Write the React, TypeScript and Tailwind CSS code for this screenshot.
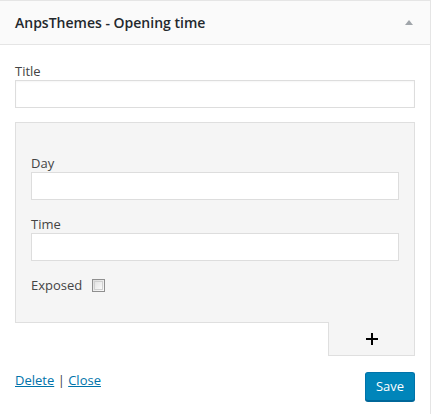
import React from "react";

export default function App() {
  return (
    <div
      className="w-[431px] h-[414px] bg-white text-[13px] text-[#444]"
      style={{ fontFamily: '"Open Sans", "Liberation Sans", sans-serif' }}
    >
      <div className="w-[431px] h-[414px] border-t border-r border-[#e5e5e5] flex flex-col">
        <div className="h-[44px] bg-[#fafafa] border-b border-[#e5e5e5] flex items-center justify-between pl-[15px] pr-[17px]">
          <span className="text-[14px] font-semibold text-[#23282d] leading-none">
            AnpsThemes - Opening time
          </span>
          <svg width="8" height="5" viewBox="0 0 8 5" className="mb-[1px]">
            <polygon points="4,0 8,5 0,5" fill="#a0a5aa" />
          </svg>
        </div>
        <div className="flex flex-col px-[15px] pt-[17px]">
          <label className="leading-[18px]">Title</label>
          <div className="h-[28px] w-[400px] border border-[#ddd] bg-white shadow-[inset_0_1px_2px_rgba(0,0,0,0.04)]" />
          <div className="mt-[14px] flex flex-col">
            <div className="w-[400px] h-[201px] border border-[#dfdfdf] bg-[#f5f5f5] px-[15px] pt-[31px] flex flex-col">
              <label className="leading-[18px]">Day</label>
              <div className="h-[28px] w-[368px] border border-[#ddd] bg-white" />
              <label className="leading-[18px] mt-[15px]">Time</label>
              <div className="h-[28px] w-[368px] border border-[#ddd] bg-white" />
              <div className="mt-[15px] flex items-center h-[18px]">
                <span className="leading-[18px]">Exposed</span>
                <span className="ml-[10px] w-[13px] h-[13px] border border-[#8f8f8f] bg-gradient-to-br from-[#dcdcdc] to-[#fbfbfb] p-[1px]">
                  <span className="block w-full h-full border border-[#d0d0d0] bg-gradient-to-br from-[#e4e4e4] to-[#fafafa]" />
                </span>
              </div>
            </div>
            <div className="self-end -mt-px w-[87px] h-[34px] bg-[#f5f5f5] border-l border-r border-b border-[#dfdfdf] flex items-center justify-center pt-[1px]">
              <svg width="12" height="12" viewBox="0 0 12 12">
                <rect x="0" y="5" width="12" height="2" fill="#000" />
                <rect x="5" y="0" width="2" height="12" fill="#000" />
              </svg>
            </div>
          </div>
          <div className="mt-[16px] flex items-start justify-between">
            <div className="leading-[18px] mt-[-1px]">
              <a className="text-[#0073aa] underline">Delete</a>
              <span className="text-[#444]"> | </span>
              <a className="text-[#0073aa] underline">Close</a>
            </div>
            <button className="h-[29px] w-[50px] rounded-[3px] bg-[#0085ba] border border-[#0073aa] border-b-[#006799] shadow-[0_1px_0_#006799] text-white text-[13px] leading-none flex items-center justify-center">
              Save
            </button>
          </div>
        </div>
      </div>
    </div>
  );
}
